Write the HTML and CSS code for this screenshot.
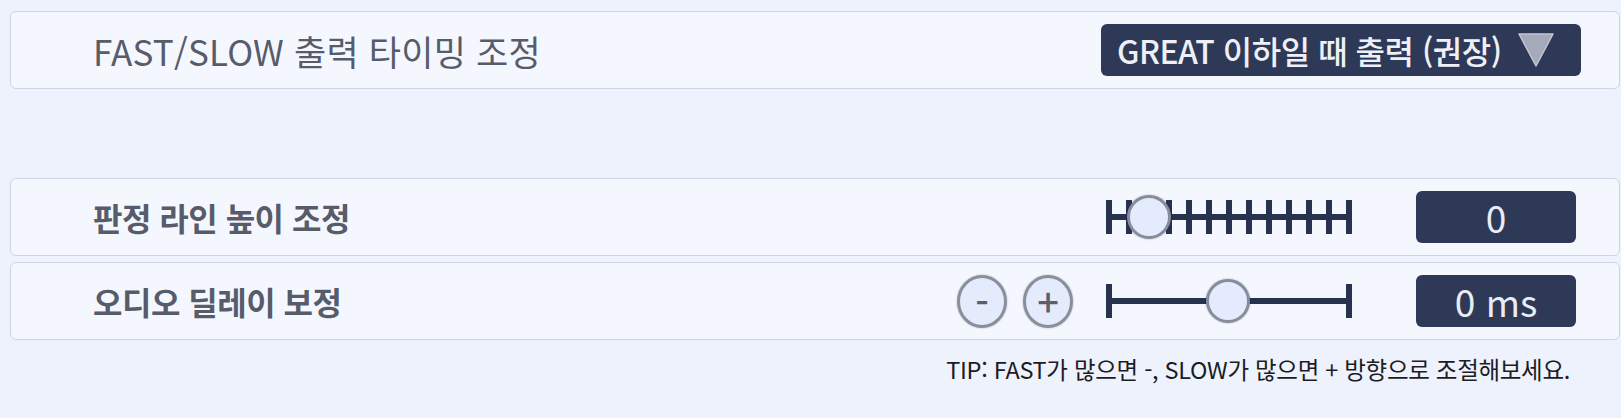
FILE: index.html
```html
<!DOCTYPE html>
<html lang="ko">
<head>
    <meta charset="UTF-8">
    <meta name="viewport" content="width=device-width, initial-scale=1.0">
    <title>판정 설정</title>
    <link rel="stylesheet" href="styles.css">
</head>
<body>
    <div class="settings">
        <!-- 출력 타이밍 -->
        <div class="card">
            <div class="label light">FAST/SLOW 출력 타이밍 조정</div>
            <div class="controls">
                <div class="dropdown">
                    <span>GREAT 이하일 때 출력 (권장)</span>
                    <svg class="caret" width="38" height="36" viewBox="0 0 38 36">
                        <polygon points="2,2 36,2 19,34" fill="#a5a9b9" stroke="#c3c6d2" stroke-width="1.5" stroke-linejoin="round"/>
                    </svg>
                </div>
            </div>
        </div>

        <div class="spacer"></div>

        <!-- 판정 라인 -->
        <div class="card">
            <div class="label">판정 라인 높이 조정</div>
            <div class="controls">
                <div class="slider">
                    <div class="ticks">
                        <span></span><span></span><span></span><span></span><span></span>
                        <span></span><span></span><span></span><span></span><span></span>
                        <span></span><span></span><span></span>
                    </div>
                    <div class="thumb" style="left: 21px;"></div>
                </div>
                <div class="value">0</div>
            </div>
        </div>

        <!-- 오디오 딜레이 -->
        <div class="card">
            <div class="label">오디오 딜레이 보정</div>
            <div class="controls">
                <div class="steppers">
                    <button class="step">-</button>
                    <button class="step">+</button>
                </div>
                <div class="slider">
                    <div class="ticks">
                        <span></span><span></span>
                    </div>
                    <div class="thumb" style="left: 100px;"></div>
                </div>
                <div class="value">0 ms</div>
            </div>
        </div>

        <p class="tip">TIP: FAST가 많으면 -, SLOW가 많으면 + 방향으로 조절해보세요.</p>
    </div>
</body>
</html>
```

FILE: styles.css
```css
body {
    font-family: "Noto Sans CJK KR", "Noto Sans", sans-serif;
    margin: 0;
    padding: 0;
    background: #eef2fd;
}

.settings {
    padding: 11px 1px 0 10px;
}

.card {
    display: flex;
    align-items: center;
    height: 76px;
    padding-left: 82px;
    background: #f5f7fe;
    border: 1px solid #cfd3e6;
    border-radius: 6px;
    margin-bottom: 6px;
}

.spacer {
    height: 83px;
}

.label {
    font-size: 32px;
    font-weight: 700;
    color: #575c6b;
    letter-spacing: -0.5px;
}

.label.light {
    font-weight: 400;
    font-size: 35px;
    letter-spacing: 0.2px;
}

.controls {
    margin-left: auto;
    display: flex;
    align-items: center;
}

.dropdown {
    display: flex;
    align-items: center;
    justify-content: space-between;
    width: 480px;
    height: 52px;
    box-sizing: border-box;
    padding: 0 26px 0 16px;
    margin-right: 38px;
    background: #2d3956;
    border-radius: 6px;
    color: #eef0f6;
    font-size: 32px;
    font-weight: 500;
    letter-spacing: -0.5px;
}

.caret {
    display: block;
}

.slider {
    position: relative;
    width: 246px;
    height: 34px;
}

.slider::before {
    content: "";
    position: absolute;
    left: 0;
    right: 0;
    top: 14px;
    height: 6px;
    background: #27324f;
}

.ticks {
    display: flex;
    justify-content: space-between;
    height: 100%;
}

.ticks span {
    width: 6px;
    height: 100%;
    background: #27324f;
}

.thumb {
    position: absolute;
    top: -5px;
    width: 44px;
    height: 44px;
    box-sizing: border-box;
    border-radius: 50%;
    background: #e3ebfd;
    border: 3px solid #878d9c;
    box-shadow: 0 0 2px rgba(0,0,0,0.35);
}

.value {
    width: 160px;
    height: 52px;
    margin: 0 43px 0 64px;
    background: #2d3956;
    border-radius: 6px;
    color: #e9ecf4;
    font-size: 37px;
    line-height: 52px;
    text-align: center;
}

.steppers {
    display: flex;
    gap: 16px;
    margin-right: 33px;
}

.step {
    width: 50px;
    height: 53px;
    padding: 0;
    border-radius: 50%;
    border: 3px solid #8a8f9c;
    background: #e4ebfc;
    box-shadow: 0 0 2px rgba(0,0,0,0.3);
    color: #5b5f69;
    font-family: "Noto Sans CJK KR", sans-serif;
    font-size: 38px;
    font-weight: 500;
    line-height: 1;
}

.tip {
    margin: 12px 50px 0 0;
    text-align: right;
    font-size: 23.5px;
    color: #1c1c22;
    letter-spacing: -0.3px;
}
```
